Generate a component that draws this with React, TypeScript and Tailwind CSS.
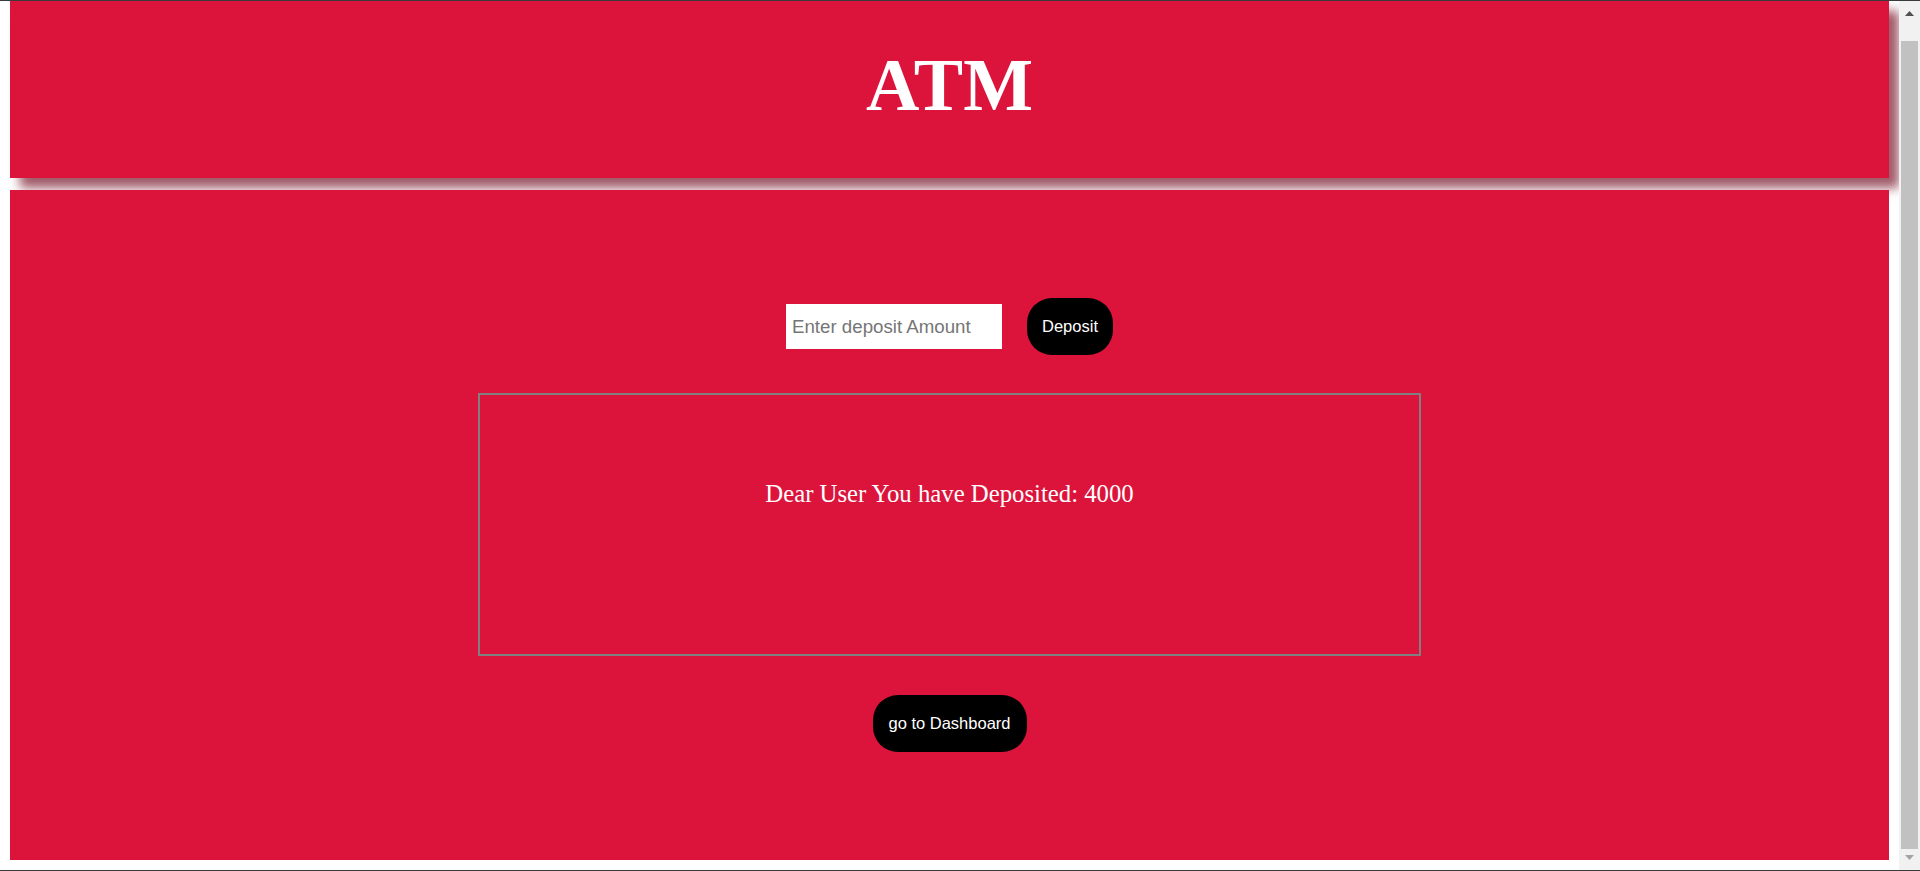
import React from 'react';

const App: React.FC = () => {
  return (
    <div className="flex h-[871px] w-full overflow-hidden border-y border-[#3a3a3a] bg-white">
      <div className="flex flex-1 flex-col px-[10px]">
        <header className="h-[177px] shrink-0 bg-[#dc143c] pt-[42px] text-center shadow-[10px_10px_10px_rgba(120,20,40,0.7)]">
          <h1 className="font-['Liberation_Serif',serif] text-[74px] font-bold leading-[1.15] text-white">ATM</h1>
        </header>
        <main className="mt-[12px] flex h-[670px] shrink-0 flex-col items-center bg-[#dc143c] pt-[108px]">
          <div className="flex items-center gap-[25px]">
            <input
              type="text"
              placeholder="Enter deposit Amount"
              className="h-[45px] w-[216px] bg-white px-[6px] font-['Liberation_Sans',Arial,sans-serif] text-[18.7px] text-black outline-none placeholder:text-[#757575]"
            />
            <button className="h-[57px] w-[86px] rounded-[25px] bg-black font-['Liberation_Sans',Arial,sans-serif] text-[16.5px] text-white">
              Deposit
            </button>
          </div>
          <div className="mt-[38px] h-[263px] w-[943px] border-2 border-[#808080] pt-[80px] text-center">
            <p className="font-['Liberation_Serif',serif] text-[24.75px] text-white">
              Dear User You have Deposited: 4000
            </p>
          </div>
          <button className="mt-[39px] h-[57px] w-[154px] rounded-[25px] bg-black font-['Liberation_Sans',Arial,sans-serif] text-[16.5px] text-white">
            go to Dashboard
          </button>
        </main>
      </div>
      {/* scrollbar */}
      <div className="flex w-[21px] shrink-0 flex-col items-center bg-[#f1f1f1]">
        <div className="flex h-[40px] w-full items-start justify-center pt-[10px]">
          <svg width="9" height="5" viewBox="0 0 9 5">
            <path d="M4.5 0 L9 5 L0 5 Z" fill="#505050" />
          </svg>
        </div>
        <div className="h-[808px] w-[17px] bg-[#c1c1c1]" />
        <div className="flex flex-1 w-full items-start justify-center pt-[6px]">
          <svg width="9" height="5" viewBox="0 0 9 5">
            <path d="M0 0 L9 0 L4.5 5 Z" fill="#a3a3a3" />
          </svg>
        </div>
      </div>
    </div>
  );
};

export default App;
